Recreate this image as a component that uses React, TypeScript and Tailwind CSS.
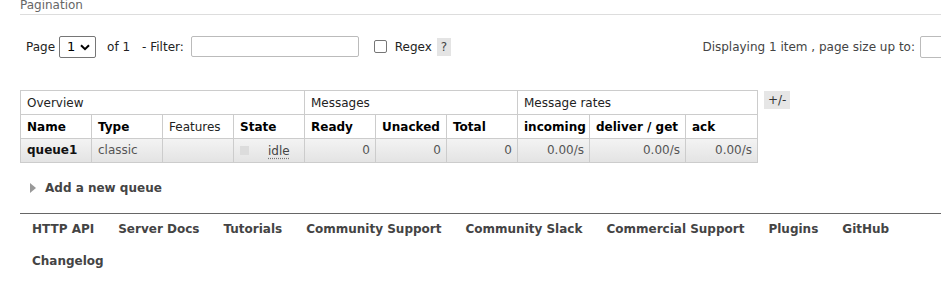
import React from 'react';

const cols = [71, 71, 71, 71, 71, 71, 71, 72, 96, 72];

const footerLinks = [
    'HTTP API',
    'Server Docs',
    'Tutorials',
    'Community Support',
    'Community Slack',
    'Commercial Support',
    'Plugins',
    'GitHub',
    'Changelog',
];

export default function App() {
    return (
        <div className="w-[941px] h-[285px] overflow-hidden bg-white text-[12px] text-[#222] font-['DejaVu_Sans',Verdana,sans-serif]">
            <div className="pl-[20px]">
                {/* Pagination header */}
                <div className="-mt-px h-[16px] border-b border-[#ddd] text-[#666] leading-[12px]">Pagination</div>

                {/* Pagination controls */}
                <div className="mt-[20px] flex items-center h-[23px] -mr-[20px]">
                    <span className="ml-[6px]">Page</span>
                    <div className="ml-[4px] relative w-[37px] h-[22px] border border-[#767676] rounded-[2px] flex items-center pl-[7px]">
                        <span className="text-[#000] text-[13px]">1</span>
                        <svg className="absolute right-[5px] top-[7px] w-[10px] h-[7px]" viewBox="0 0 10 7" fill="none">
                            <path d="M1 1.2l4 4 4-4" stroke="#000" strokeWidth="2" />
                        </svg>
                    </div>
                    <span className="ml-[11px]">of 1</span>
                    <span className="ml-[12px]">- Filter:</span>
                    <div className="ml-[7px] w-[168px] h-[21px] border border-[#bbb] rounded-[2px]" />
                    <div className="ml-[15px] w-[13px] h-[13px] border border-[#767676] rounded-[2px]" />
                    <span className="ml-[8px]">Regex</span>
                    <span className="ml-[5px] w-[14px] h-[18px] bg-[#e4e4e4] flex items-center justify-center text-[#444]">?</span>
                    <span className="ml-auto text-[#444]">Displaying 1 item , page size up to:</span>
                    <div className="ml-[5px] w-[41px] h-[22px] border border-[#bbb] rounded-l-[2px] shrink-0" />
                </div>

                {/* Queues table */}
                <div className="mt-[32px] flex items-start">
                    <table className="table-fixed border-collapse w-[737px]">
                        <colgroup>
                            {cols.map((w, i) => (
                                <col key={i} style={{ width: w }} />
                            ))}
                        </colgroup>
                        <thead>
                            <tr className="h-[24px]">
                                <th colSpan={4} className="border border-[#ccc] text-left font-normal px-[6px] text-[#222]">Overview</th>
                                <th colSpan={3} className="border border-[#ccc] text-left font-normal px-[6px] text-[#222]">Messages</th>
                                <th colSpan={3} className="border border-[#ccc] text-left font-normal px-[6px] text-[#222]">Message rates</th>
                            </tr>
                            <tr className="h-[24px]">
                                <th className="border border-[#ccc] text-left px-[6px] text-black">Name</th>
                                <th className="border border-[#ccc] text-left px-[6px] text-black">Type</th>
                                <th className="border border-[#ccc] text-left px-[6px] font-normal text-[#222]">Features</th>
                                <th className="border border-[#ccc] text-left px-[6px] text-black">State</th>
                                <th className="border border-[#ccc] text-left px-[6px] text-black">Ready</th>
                                <th className="border border-[#ccc] text-left px-[6px] text-black">Unacked</th>
                                <th className="border border-[#ccc] text-left px-[6px] text-black">Total</th>
                                <th className="border border-[#ccc] text-left px-[6px] text-black">incoming</th>
                                <th className="border border-[#ccc] text-left px-[6px] text-black">deliver / get</th>
                                <th className="border border-[#ccc] text-left px-[6px] text-black">ack</th>
                            </tr>
                        </thead>
                        <tbody>
                            <tr className="h-[24px] bg-gradient-to-b from-[#f3f3f3] to-[#e3e3e3] text-[#555]">
                                <td className="border border-[#ccc] px-[6px] pb-[2px] font-bold text-[#111]">queue1</td>
                                <td className="border border-[#ccc] px-[6px] pb-[2px]">classic</td>
                                <td className="border border-[#ccc] px-[6px]"></td>
                                <td className="border border-[#ccc] px-[6px]">
                                    <div className="flex items-center">
                                        <span className="w-[9px] h-[9px] bg-[#dcdcdc]" />
                                        <span className="ml-[19px] text-[#444] underline decoration-dotted underline-offset-[3px] decoration-[#777]">idle</span>
                                    </div>
                                </td>
                                <td className="border border-[#ccc] px-[5px] pb-[2px] text-right">0</td>
                                <td className="border border-[#ccc] px-[5px] pb-[2px] text-right">0</td>
                                <td className="border border-[#ccc] px-[5px] pb-[2px] text-right">0</td>
                                <td className="border border-[#ccc] px-[5px] pb-[2px] text-right">0.00/s</td>
                                <td className="border border-[#ccc] px-[5px] pb-[2px] text-right">0.00/s</td>
                                <td className="border border-[#ccc] px-[5px] pb-[2px] text-right">0.00/s</td>
                            </tr>
                        </tbody>
                    </table>
                    <span className="ml-[6px] mt-[1px] h-[18px] px-[4px] bg-[#e6e6e6] text-[#333] leading-[18px]">+/-</span>
                </div>

                {/* Add a new queue */}
                <div className="mt-[18px] flex items-center h-[14px]">
                    <svg className="ml-[10px] w-[6px] h-[10px]" viewBox="0 0 6 10">
                        <path d="M0 0L6 5L0 10z" fill="#999" />
                    </svg>
                    <span className="ml-[9px] font-bold text-[#444]">Add a new queue</span>
                </div>

                {/* Footer */}
                <div className="mt-[18px] border-t border-[#666]">
                    <ul className="flex flex-wrap w-[900px] -mt-px">
                        {footerLinks.map((l) => (
                            <li key={l} className="px-[12px] h-[32px] leading-[32px] font-bold text-[#444]">
                                {l}
                            </li>
                        ))}
                    </ul>
                </div>
            </div>
        </div>
    );
}
